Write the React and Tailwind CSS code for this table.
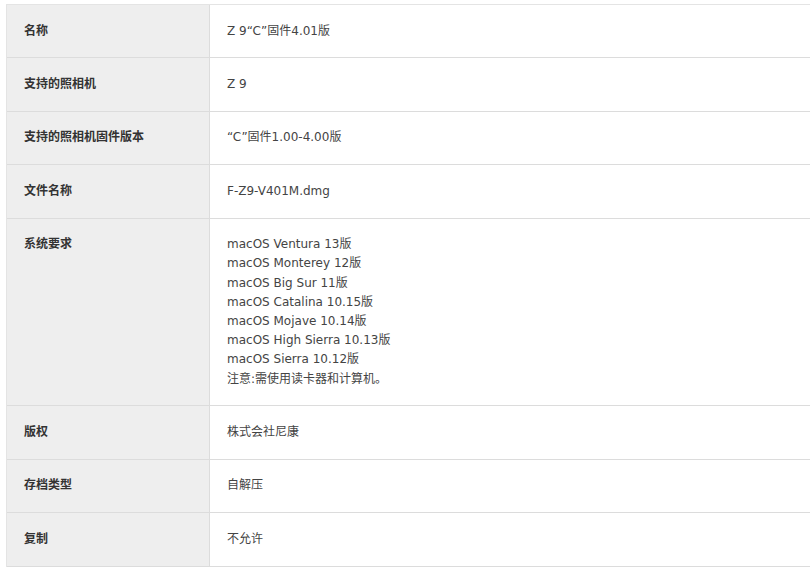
const rows = [
  { label: "名称", value: ["Z 9“C”固件4.01版"] },
  { label: "支持的照相机", value: ["Z 9"] },
  { label: "支持的照相机固件版本", value: ["“C”固件1.00-4.00版"] },
  { label: "文件名称", value: ["F-Z9-V401M.dmg"] },
  {
    label: "系统要求",
    value: [
      "macOS Ventura 13版",
      "macOS Monterey 12版",
      "macOS Big Sur 11版",
      "macOS Catalina 10.15版",
      "macOS Mojave 10.14版",
      "macOS High Sierra 10.13版",
      "macOS Sierra 10.12版",
      "注意:需使用读卡器和计算机。",
    ],
  },
  { label: "版权", value: ["株式会社尼康"] },
  { label: "存档类型", value: ["自解压"] },
  { label: "复制", value: ["不允许"] },
];

export default function App() {
  return (
    <div
      className="min-h-[576px] bg-white pl-[6px] pt-[4px] text-[12px] leading-[19.2px] text-[#333]"
      style={{ fontFamily: '"DejaVu Sans", "Noto Sans CJK SC", sans-serif' }}
    >
      <div className="w-[830px] border-t border-l border-[#e4e4e4]">
        {rows.map((row) => (
          <div key={row.label} className="flex border-b border-[#dcdcdc]">
            <div className="w-[203px] shrink-0 border-r border-[#dcdcdc] bg-[#eeeeee] px-[17px] py-[16.6px] font-bold text-[#333]">
              {row.label}
            </div>
            <div className="flex-1 px-[17px] py-[16.6px] text-[#444]">
              {row.value.map((line) => (
                <div key={line}>{line}</div>
              ))}
            </div>
          </div>
        ))}
      </div>
    </div>
  );
}
